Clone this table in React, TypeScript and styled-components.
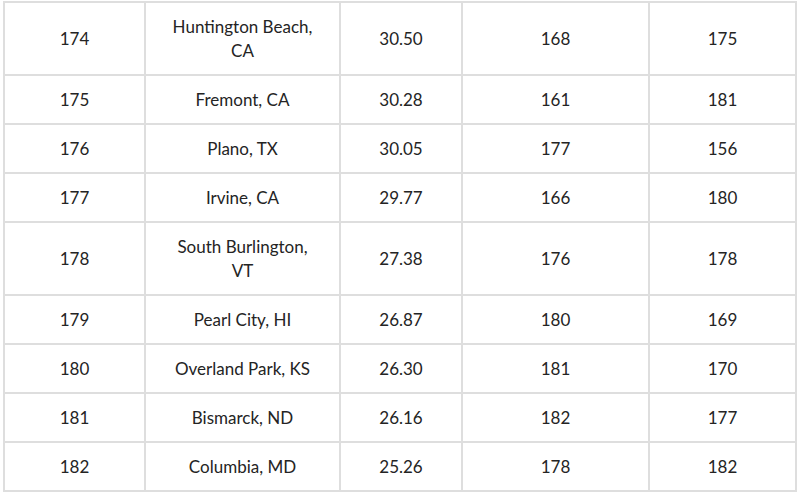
import styled, { createGlobalStyle } from "styled-components";

const GlobalStyle = createGlobalStyle`
  html, body {
    margin: 0;
    padding: 0;
    background: #ffffff;
  }
  body {
    font-family: Lato, "Open Sans", Arial, sans-serif;
  }
`;

const Page = styled.div`
  width: 800px;
  height: 496px;
  overflow: hidden;
  padding: 1px 0 0 3px;
  box-sizing: border-box;
`;

const Grid = styled.div`
  display: grid;
  width: 794px;
  grid-template-columns: 139px 193px 120px 185px 145px;
  gap: 2px;
  padding: 2px;
  box-sizing: border-box;
  background: #dedede;
`;

const Cell = styled.div<{ $tall?: boolean }>`
  height: ${(p) => (p.$tall ? 71 : 47)}px;
  display: flex;
  align-items: center;
  justify-content: center;
  text-align: center;
  background: #ffffff;
  color: #242424;
  font-size: 17px;
  line-height: 24px;
  padding: 0 22px;
  box-sizing: border-box;
`;

type Row = [string, string, string, string, string];

const rows: Row[] = [
  ["174", "Huntington Beach, CA", "30.50", "168", "175"],
  ["175", "Fremont, CA", "30.28", "161", "181"],
  ["176", "Plano, TX", "30.05", "177", "156"],
  ["177", "Irvine, CA", "29.77", "166", "180"],
  ["178", "South Burlington, VT", "27.38", "176", "178"],
  ["179", "Pearl City, HI", "26.87", "180", "169"],
  ["180", "Overland Park, KS", "26.30", "181", "170"],
  ["181", "Bismarck, ND", "26.16", "182", "177"],
  ["182", "Columbia, MD", "25.26", "178", "182"],
];

export default function App() {
  return (
    <>
      <GlobalStyle />
      <Page>
        <Grid>
          {rows.map((row) => {
            const tall = row[1].length > 18;
            return row.map((value, i) => (
              <Cell key={row[0] + "-" + i} $tall={tall}>
                {value}
              </Cell>
            ));
          })}
        </Grid>
      </Page>
    </>
  );
}
